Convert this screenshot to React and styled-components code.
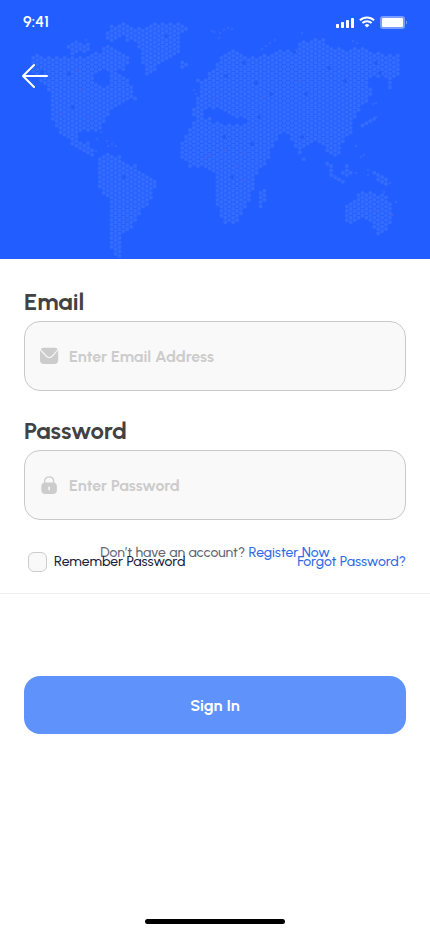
import React from 'react';
import styled, { createGlobalStyle } from 'styled-components';

const GlobalStyle = createGlobalStyle`
  *, *::before, *::after { box-sizing: border-box; }
  body {
    margin: 0;
    background: #ffffff;
    font-family: Urbanist, Lato, "Liberation Sans", sans-serif;
  }
`;

const Screen = styled.div`
  display: flex;
  flex-direction: column;
  min-height: 100vh;
`;

const Header = styled.header`
  position: relative;
  display: flex;
  flex-direction: column;
  gap: 18px;
  min-height: 259px;
  overflow: hidden;
  background: #225eff;
  color: #ffffff;
`;

const Map = styled.svg`
  position: absolute;
  inset: 0;
  width: 100%;
  height: 100%;
`;

const StatusBar = styled.div`
  position: relative;
  display: flex;
  align-items: center;
  justify-content: space-between;
  height: 44px;
  padding: 0 22px 0 23px;
`;

const Time = styled.time`
  font-size: 16px;
  font-weight: 600;
  line-height: 20px;
`;

const StatusIcons = styled.div`
  display: flex;
  align-items: center;
  gap: 5px;

  svg { display: block; }
`;

const BackButton = styled.button`
  position: relative;
  display: flex;
  align-self: flex-start;
  margin-left: 20px;
  padding: 0;
  border: 0;
  background: none;
  color: inherit;
  cursor: pointer;
`;

const Form = styled.form`
  display: flex;
  flex-direction: column;
  flex: 1;
  padding-top: 28px;
`;

const Fields = styled.div`
  display: flex;
  flex-direction: column;
  gap: 25px;
  padding: 0 24px;
`;

const Field = styled.div`
  display: flex;
  flex-direction: column;
  gap: 4px;
`;

const Label = styled.label`
  color: #424242;
  font-size: 24px;
  font-weight: 700;
  line-height: 30px;
`;

const InputBox = styled.div`
  display: flex;
  align-items: center;
  gap: 10px;
  height: 70px;
  padding: 0 15px;
  border: 1px solid #c9c9c9;
  border-radius: 16px;
  background: #f9f9f9;
  color: #cccccc;

  svg { flex: none; }
`;

const Input = styled.input`
  flex: 1;
  min-width: 0;
  padding: 2px 0 0;
  border: 0;
  outline: 0;
  background: none;
  color: #424242;
  font-family: inherit;
  font-size: 16px;
  font-weight: 700;
  line-height: 20px;

  &::placeholder { color: #cccccc; opacity: 1; }
`;

const Overlap = styled.div`
  display: grid;
  grid-template-areas: "stack";
  align-items: start;
  min-height: 74px;
  border-bottom: 1px solid #eeeeee;
  font-size: 14px;
  font-weight: 500;
  line-height: 20px;
`;

const Register = styled.p`
  grid-area: stack;
  justify-self: center;
  margin: 0;
  padding-top: 23px;
  color: #616775;
`;

const Options = styled.div`
  grid-area: stack;
  display: flex;
  align-items: center;
  justify-content: space-between;
  padding: 31px 24px 0 28px;
  line-height: 22px;
`;

const Remember = styled.label`
  display: flex;
  align-items: center;
  gap: 7px;
  color: #17233d;
`;

const Checkbox = styled.input`
  appearance: none;
  width: 19px;
  height: 20px;
  margin: 0;
  border: 1px solid #cccccc;
  border-radius: 6px;
  background: #f9f9f9;

  &:checked { background: #225eff; }
`;

const Link = styled.a`
  position: relative;
  color: #2f6be8;
  text-decoration: none;
`;

const SignIn = styled.button`
  height: 58px;
  margin: 82px 24px 0;
  padding: 2px 0 0;
  border: 0;
  border-radius: 16px;
  background: #5f93fb;
  color: #ffffff;
  font-family: inherit;
  font-size: 16px;
  font-weight: 700;
  line-height: 20px;
  cursor: pointer;
`;

const HomeIndicator = styled.div`
  align-self: center;
  width: 140px;
  height: 5px;
  margin-bottom: 8px;
  border-radius: 3px;
  background: #000000;
`;

const land = [
  // North and Central America
  [[30,54],[40,55],[52,57],[66,56],[76,58],[88,57],[95,51],[104,53],[112,56],[116,68],[122,74],[128,80],[132,88],[137,100],[131,98],[127,101],[119,105],[111,112],[107,120],[101,127],[102,134],[98,130],[90,130],[80,132],[79,142],[88,142],[94,151],[94,157],[88,155],[80,150],[71,147],[68,140],[62,134],[56,126],[50,115],[49,90],[42,84],[38,78],[30,72]],
  [[65,46],[75,42],[88,43],[93,48],[85,53],[72,54]],
  [[103,32],[112,26],[124,24],[133,27],[138,40],[128,42],[122,36],[116,40],[106,42]],
  [[98,49],[108,43],[118,50],[125,55],[131,61],[124,66],[124,72],[115,67],[108,58]],
  // Greenland and Iceland
  [[133,28],[145,27],[158,22],[183,22],[187,30],[180,35],[180,50],[172,57],[160,64],[152,76],[144,74],[141,50],[135,42]],
  [[176,62],[182,60],[187,65],[182,69]],
  // South America
  [[100,157],[107,153],[120,156],[127,163],[137,166],[142,174],[150,175],[157,180],[156,187],[152,193],[149,206],[141,210],[138,219],[131,228],[123,236],[121,246],[122,258],[116,255],[110,248],[110,200],[105,195],[98,187],[98,168]],
  // Europe and Asia
  [[197,78],[204,83],[210,73],[218,60],[230,50],[241,54],[251,57],[261,56],[270,53],[280,51],[294,50],[300,43],[312,39],[325,40],[330,46],[345,50],[362,48],[372,53],[400,55],[400,72],[394,77],[391,88],[386,88],[388,78],[378,78],[368,78],[371,88],[370,98],[363,105],[358,114],[352,120],[355,128],[345,138],[340,148],[338,158],[328,156],[322,144],[313,142],[303,147],[304,160],[298,155],[290,137],[281,133],[274,145],[264,157],[255,148],[244,128],[230,124],[218,120],[209,114],[200,120],[192,118],[192,108],[199,106],[196,98],[201,92]],
  // Africa and Arabia
  [[196,120],[207,117],[215,122],[232,126],[248,124],[275,132],[275,145],[264,165],[255,175],[252,197],[245,210],[238,221],[231,224],[223,222],[216,205],[214,175],[206,166],[188,166],[181,156],[180,145],[187,132]],
  [[258,192],[265,188],[265,202],[260,210],[257,206]],
  // Australia
  [[344,207],[352,201],[360,193],[373,190],[378,195],[384,190],[393,208],[392,221],[386,232],[380,237],[374,229],[370,222],[362,219],[346,224]],
  // Islands
  [[325,160],[330,161],[336,176],[346,184],[340,184],[330,177]],
  [[341,170],[350,162],[351,176],[344,178]],
  [[373,172],[381,174],[391,184],[382,185]],
  [[360,122],[365,121],[375,115],[377,118],[370,122],[362,126]],
];

const seas = [
  [[95,73],[102,68],[109,73],[110,82],[103,86],[96,81]],
  [[204,109],[218,109],[224,112],[232,113],[236,118],[245,119],[245,124],[232,125],[220,121],[212,117],[203,116]],
];

const islets = [
  [214,32],[220,33],[224,30],[228,28],[232,29],[219,38],[262,49],[266,46],[270,43],[275,40],[302,33],[353,41],[357,43],
  [196,94],[194,90],[212,31],[97,139],[101,132],[88,142],[107,141],[112,144],[108,146],[116,146],[96,151],[335,176],
  [356,146],[364,155],[361,157],[356,173],[368,170],[368,175],[390,183],[396,202],[384,192],[115,246],[120,257],
  [86,40],[77,42],[373,104],[376,103],[376,117],[391,83],
];

const darkSpots = [
  [42,72],[69,74],[73,107],[166,36],[124,177],[232,177],[244,63],[256,83],[271,94],[306,94],[329,68],
  [345,81],[294,52],[259,117],[302,137],[376,63],[380,73],[224,137],[252,144],[226,76],
];

const warmSpots = [
  [77,70],[81,90],[61,114],[88,117],[127,220],[299,81],[263,97],[213,99],[205,158],[209,155],
  [224,150],[244,153],[236,166],[244,180],[376,211],[392,215],
];

const inside = (x, y, shape) => {
  let hit = false;
  for (let i = 0, j = shape.length - 1; i < shape.length; j = i++) {
    const [xi, yi] = shape[i];
    const [xj, yj] = shape[j];
    if (yi > y !== yj > y && x < ((xj - xi) * (y - yi)) / (yj - yi) + xi) hit = !hit;
  }
  return hit;
};

const circle = (x, y, r) =>
  `M${(x - r).toFixed(2)} ${y.toFixed(2)}a${r} ${r} 0 1 0 ${2 * r} 0a${r} ${r} 0 1 0 ${-2 * r} 0`;

const landPath = (() => {
  const parts = [];
  for (let col = 0; col < 96; col += 1) {
    const x = 29.3 + col * 3.92;
    for (let row = 0; row < 56; row += 1) {
      const y = 19.7 + row * 4.5 + (col % 2 ? 2.25 : 0);
      if (land.some((s) => inside(x, y, s)) && !seas.some((s) => inside(x, y, s))) {
        parts.push(circle(x, y, 2));
      }
    }
  }
  return parts.join('');
})();

const isletPath = islets.map(([x, y]) => circle(x, y, 1.3)).join('');
const darkPath = darkSpots.map(([x, y]) => circle(x, y, 2)).join('');
const warmPath = warmSpots.map(([x, y]) => circle(x, y, 1.6)).join('');

function WorldMap() {
  return (
    <Map viewBox="0 0 430 259" preserveAspectRatio="xMidYMid slice" aria-hidden="true">
      <path d={landPath} fill="#346cff" />
      <path d={isletPath} fill="#3068ff" />
      <path d={darkPath} fill="#235cf5" />
      <path d={warmPath} fill="#4263ec" />
    </Map>
  );
}

function Signal() {
  return (
    <svg width="18" height="12" viewBox="0 0 18 12" fill="#fff" aria-hidden="true">
      <rect x="0" y="8" width="3" height="4" rx=".7" />
      <rect x="5" y="6" width="3" height="6" rx=".7" />
      <rect x="10" y="4" width="3" height="8" rx=".7" />
      <rect x="15" y="2" width="3" height="10" rx=".7" />
    </svg>
  );
}

function Wifi() {
  return (
    <svg width="16" height="12" viewBox="0 0 16 12" fill="none" stroke="#fff" strokeWidth="2" aria-hidden="true">
      <path d="M.9 4.3a10.2 10.2 0 0 1 14.2 0" />
      <path d="M3.4 7a6.6 6.6 0 0 1 9.2 0" />
      <path d="M8 11.6 5.6 9.2a3.5 3.5 0 0 1 4.8 0z" fill="#fff" stroke="none" />
    </svg>
  );
}

function Battery() {
  return (
    <svg width="28" height="13" viewBox="0 0 28 13" fill="#fff" aria-hidden="true">
      <rect width="25" height="13" rx="3" opacity=".4" />
      <rect x="2" y="2" width="21" height="9" rx="1.2" />
      <path d="M26 4.5v4c1.4-.6 1.4-3.4 0-4z" opacity=".4" />
    </svg>
  );
}

function BackArrow() {
  return (
    <svg width="30" height="28" viewBox="0 0 30 28" fill="none" stroke="#fff" strokeWidth="2" strokeLinecap="round" strokeLinejoin="round" aria-hidden="true">
      <path d="M14 3 3 14l11 11M3 14h24" />
    </svg>
  );
}

function MailIcon() {
  return (
    <svg width="19" height="18" viewBox="0 0 19 18" fill="currentColor" aria-hidden="true">
      <path d="M.9 2.4C1.6 1.2 2.8.8 4.3.8h9.9c1.5 0 2.7.4 3.4 1.6L11.500 9c-1.300 1.400-3.200 1.400-4.500 0z" />
      <path d="M0 3.300 6 9.800c1.800 1.900 4.700 1.900 6.500 0L18.200 3.300V13c0 2.700-1.400 4.100-4.100 4.100H4.100C1.400 17.100 0 15.700 0 13z" />
    </svg>
  );
}

function LockIcon() {
  return (
    <svg width="19" height="18" viewBox="0 0 19 18" aria-hidden="true">
      <path d="M4.700 8V5.200C4.700 2.500 6.600.8 9.200.8s4.400 1.700 4.400 4.400V8" fill="none" stroke="currentColor" strokeWidth="1.300" />
      <rect x="1.300" y="6.500" width="15.600" height="11.500" rx="4" fill="currentColor" />
      <path d="M9.100 11.200v2.600" stroke="#f9f9f9" strokeWidth="1.500" strokeLinecap="round" />
    </svg>
  );
}

export default function App() {
  return (
    <Screen>
      <GlobalStyle />
      <Header>
        <WorldMap />
        <StatusBar>
          <Time>9:41</Time>
          <StatusIcons>
            <Signal />
            <Wifi />
            <Battery />
          </StatusIcons>
        </StatusBar>
        <BackButton type="button" aria-label="Back">
          <BackArrow />
        </BackButton>
      </Header>
      <Form onSubmit={(e) => e.preventDefault()}>
        <Fields>
          <Field>
            <Label htmlFor="email">Email</Label>
            <InputBox>
              <MailIcon />
              <Input id="email" type="email" placeholder="Enter Email Address" />
            </InputBox>
          </Field>
          <Field>
            <Label htmlFor="password">Password</Label>
            <InputBox>
              <LockIcon />
              <Input id="password" type="password" placeholder="Enter Password" />
            </InputBox>
          </Field>
        </Fields>
        <Overlap>
          <Register>
            Don’t have an account? <Link href="#register">Register Now</Link>
          </Register>
          <Options>
            <Remember>
              <Checkbox type="checkbox" />
              Remember Password
            </Remember>
            <Link href="#forgot">Forgot Password?</Link>
          </Options>
        </Overlap>
        <SignIn type="submit">Sign In</SignIn>
      </Form>
      <HomeIndicator />
    </Screen>
  );
}
